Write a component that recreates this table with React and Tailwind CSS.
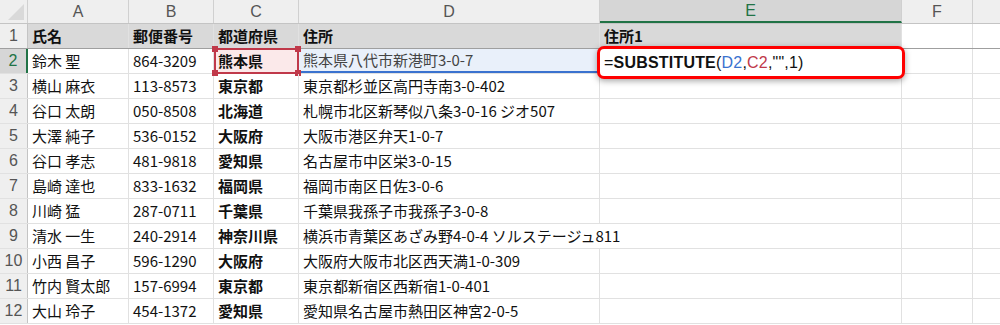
import React from 'react';

const rows = [
  ['鈴木 聖', '864-3209', '熊本県', '熊本県八代市新港町3-0-7'],
  ['横山 麻衣', '113-8573', '東京都', '東京都杉並区高円寺南3-0-402'],
  ['谷口 太朗', '050-8508', '北海道', '札幌市北区新琴似八条3-0-16 ジオ507'],
  ['大澤 純子', '536-0152', '大阪府', '大阪市港区弁天1-0-7'],
  ['谷口 孝志', '481-9818', '愛知県', '名古屋市中区栄3-0-15'],
  ['島崎 達也', '833-1632', '福岡県', '福岡市南区日佐3-0-6'],
  ['川崎 猛', '287-0711', '千葉県', '千葉県我孫子市我孫子3-0-8'],
  ['清水 一生', '240-2914', '神奈川県', '横浜市青葉区あざみ野4-0-4 ソルステージュ811'],
  ['小西 昌子', '596-1290', '大阪府', '大阪府大阪市北区西天満1-0-309'],
  ['竹内 賢太郎', '157-6994', '東京都', '東京都新宿区西新宿1-0-401'],
  ['大山 玲子', '454-1372', '愛知県', '愛知県名古屋市熱田区神宮2-0-5'],
];

const font = { fontFamily: '"Noto Sans CJK JP", "Noto Sans", sans-serif' };

function Handle({ className }) {
  return <span className={`absolute w-[6px] h-[6px] bg-[#c0394a] ${className}`} />;
}

export default function App() {
  const cell = 'h-full border-r border-[#e1e1e1] px-[4px] flex items-center whitespace-nowrap';
  return (
    <div className="relative w-[1000px] h-[325px] overflow-hidden bg-white text-[15px] text-[#111]" style={font}>
      {/* Column headers */}
      <div className="flex h-[24px] bg-[#efefef] border-b border-[#c4c4c4] text-[#555] text-[16px] font-['Liberation_Sans',sans-serif]">
        <div className="w-[28px] h-full border-r border-[#d0d0d0] relative overflow-hidden">
          <div className="absolute right-[3px] bottom-[3px] w-0 h-0 border-l-[16px] border-l-transparent border-b-[16px] border-b-[#d9d9d9]" />
        </div>
        <div className="w-[101px] h-full border-r border-[#d0d0d0] flex items-center justify-center">A</div>
        <div className="w-[85px] h-full border-r border-[#d0d0d0] flex items-center justify-center">B</div>
        <div className="w-[85px] h-full border-r border-[#d0d0d0] flex items-center justify-center">C</div>
        <div className="w-[301px] h-full border-r border-[#d0d0d0] flex items-center justify-center">D</div>
        <div className="w-[302px] h-full border-r border-[#d0d0d0] bg-[#d6d6d6] border-b-2 border-b-[#217346] flex items-center justify-center text-[#217346]">E</div>
        <div className="w-[71px] h-full border-r border-[#d0d0d0] flex items-center justify-center">F</div>
        <div className="flex-1 h-full" />
      </div>

      {/* Row 1: header row */}
      <div className="flex h-[25px] border-b border-[#9f9f9f]">
        <div className="w-[28px] h-full bg-[#efefef] border-r border-[#c4c4c4] flex items-center justify-center text-[#555] text-[16px] font-['Liberation_Sans',sans-serif]">1</div>
        <div className={`w-[101px] bg-[#d9d9d9] font-bold ${cell}`}>氏名</div>
        <div className={`w-[85px] bg-[#d9d9d9] font-bold ${cell}`}>郵便番号</div>
        <div className={`w-[85px] bg-[#d9d9d9] font-bold ${cell}`}>都道府県</div>
        <div className={`w-[301px] bg-[#d9d9d9] font-bold ${cell}`}>住所</div>
        <div className={`w-[302px] bg-[#d9d9d9] font-bold ${cell}`}>住所1</div>
        <div className={`w-[71px] ${cell}`} />
        <div className="flex-1" />
      </div>

      {rows.map((r, i) => {
        const n = i + 2;
        const active = n === 2;
        const overflow = n === 9;
        return (
          <div key={n} className="flex h-[25px] border-b border-[#e1e1e1]">
            <div
              className={`w-[28px] h-full border-r flex items-center justify-center text-[16px] font-['Liberation_Sans',sans-serif] ${
                active
                  ? 'bg-[#d6d6d6] text-[#217346] border-r-2 border-r-[#217346]'
                  : 'bg-[#efefef] text-[#555] border-[#c4c4c4]'
              }`}
            >
              {n}
            </div>
            <div className={`w-[101px] ${cell}`}>{r[0]}</div>
            <div className={`w-[85px] ${cell}`}>{r[1]}</div>
            <div className={`w-[85px] font-bold relative ${cell} ${active ? 'bg-[#fbe9ea]' : ''}`}>
              {r[2]}
              {active && (
                <>
                  <div className="absolute left-0 top-[-1px] right-[-1px] bottom-[-1px] border-2 border-[#c0394a]" />
                  <Handle className="left-[-2px] top-[-3px]" />
                  <Handle className="right-[-3px] top-[-3px]" />
                  <Handle className="left-[-2px] bottom-[-3px]" />
                  <Handle className="right-[-3px] bottom-[-3px]" />
                </>
              )}
            </div>
            <div
              className={`w-[301px] ${cell} ${active ? 'bg-[#e9f0fa] text-[#444] border-b-2 border-b-[#3a72cf]' : ''} ${
                overflow ? 'border-r-transparent overflow-visible relative z-10' : ''
              }`}
            >
              {r[3]}
            </div>
            <div className={`w-[302px] ${cell}`} />
            <div className={`w-[71px] ${cell}`} />
            <div className="flex-1" />
          </div>
        );
      })}

      {/* Formula being edited in E2 */}
      <div className="absolute left-[597px] top-[46px] w-[308px] h-[33px] bg-white border-[3px] border-[#ff0000] rounded-[7px] shadow-[0_2px_6px_rgba(0,0,0,0.35)] flex items-center pl-[4px] text-[16px] font-['Liberation_Sans',sans-serif] text-[#111] tracking-[0.2px]">
        <span>=</span>
        <span className="font-bold">SUBSTITUTE</span>
        <span>(</span>
        <span className="text-[#3a72cf]">D2</span>
        <span>,</span>
        <span className="text-[#c0394a]">C2</span>
        <span>,"",1)</span>
      </div>
    </div>
  );
}
